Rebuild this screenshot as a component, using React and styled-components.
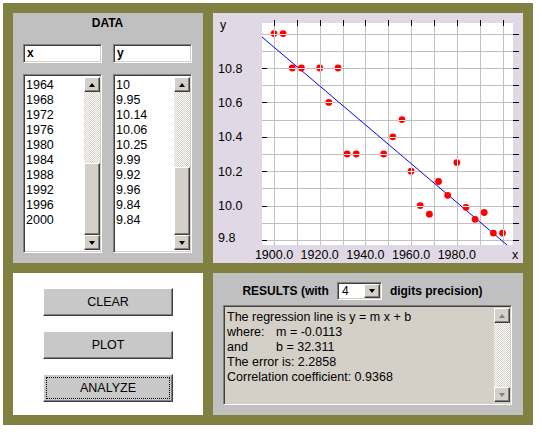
import React from 'react';
import styled, { createGlobalStyle } from 'styled-components';

const Global = createGlobalStyle`
  html, body { margin: 0; padding: 0; background: #fff; }
  body { font-family: "Liberation Sans", Arial, sans-serif; font-size: 12px; color: #000; }
`;

const Frame = styled.div`
  margin: 3px;
  width: 530px;
  height: 422px;
  box-sizing: border-box;
  background: #808040;
  padding: 10px;
  display: grid;
  grid-template-columns: 190px 310px;
  grid-template-rows: 250px 142px;
  gap: 10px;
`;

const DataPanel = styled.section`
  background: #c0c0c0;
  padding: 3px 11px 10px 10px;
  display: grid;
  grid-template-columns: 79px 79px;
  grid-template-rows: auto auto 1fr;
  column-gap: 11px;
  min-height: 0;
`;

const Title = styled.div`
  grid-column: 1 / -1;
  text-align: center;
  font-weight: bold;
  font-size: 12px;
  line-height: 14px;
`;

const sunken = `
  border: 1px solid;
  border-color: #808080 #ffffff #ffffff #808080;
  box-shadow: inset 1px 1px 0 #404040, inset -1px -1px 0 #d4d0c8;
`;

const raised = `
  border: 1px solid;
  border-color: #ffffff #404040 #404040 #ffffff;
  box-shadow: inset -1px -1px 0 #808080;
`;

const TextField = styled.div`
  ${sunken}
  margin-top: 14px;
  background: #fff;
  box-sizing: border-box;
  height: 19px;
  padding: 1px 3px;
  font-weight: bold;
  line-height: 15px;
`;

const ListBox = styled.div`
  ${sunken}
  margin-top: 11px;
  box-sizing: border-box;
  background: #fff;
  display: flex;
  padding: 1px;
  min-height: 0;
`;

const Items = styled.div`
  flex: 1;
  padding: 2px 0 0 1px;
  line-height: 15px;
  font-size: 12.5px;
`;

const ScrollBar = styled.div`
  width: 16px;
  display: flex;
  flex-direction: column;
  margin: 1px 0;
`;

const ArrowBtn = styled.div`
  ${raised}
  box-sizing: border-box;
  width: 16px;
  height: 15px;
  background: #d4d0c8;
  display: flex;
  align-items: center;
  justify-content: center;
  &::after {
    content: '';
    width: 0;
    height: 0;
    border-left: 3.5px solid transparent;
    border-right: 3.5px solid transparent;
    ${({ $dir, $disabled }) =>
      $dir === 'up'
        ? `border-bottom: 4px solid ${$disabled ? '#808080' : '#000'};`
        : `border-top: 4px solid ${$disabled ? '#808080' : '#000'};`}
  }
`;

const Track = styled.div`
  flex: 1;
  display: flex;
  flex-direction: column;
  justify-content: flex-end;
  background: repeating-conic-gradient(#d4d0c8 0 25%, #ffffff 0 50%) 0 0 / 2px 2px;
`;

const Thumb = styled.div`
  ${raised}
  box-sizing: border-box;
  background: #d4d0c8;
  height: ${({ $h }) => $h}px;
`;

const PlotPanel = styled.section`
  background: #e0d8e4;
`;

const ButtonPanel = styled.section`
  background: #fff;
  display: flex;
  flex-direction: column;
  align-items: center;
  padding-top: 15px;
  gap: 15px;
`;

const Button = styled.button`
  ${raised}
  width: 130px;
  height: 28px;
  background: #c8c8c8;
  font-family: "Liberation Sans", Arial, sans-serif;
  font-size: 12.5px;
  color: #000;
  padding: 0;
  border-radius: 0;
  outline: ${({ $focus }) => ($focus ? '1px dotted #000' : 'none')};
  outline-offset: -4px;
`;

const ResultsPanel = styled.section`
  background: #c0c0c0;
  padding: 9px 11px 10px 10px;
  display: flex;
  flex-direction: column;
  gap: 5px;
`;

const Header = styled.div`
  display: flex;
  align-items: center;
  justify-content: center;
  gap: 8px;
  font-weight: bold;
  padding-right: 10px;
`;

const Select = styled.div`
  ${sunken}
  box-sizing: border-box;
  width: 45px;
  height: 18px;
  background: #fff;
  display: flex;
  align-items: center;
  padding: 1px;
  font-weight: normal;
`;

const SelectValue = styled.span`
  flex: 1;
  padding-left: 3px;
`;

const DropBtn = styled(ArrowBtn)`
  height: 14px;
`;

const ResultArea = styled.div`
  ${sunken}
  flex: 1;
  box-sizing: border-box;
  background: #d4d0c8;
  display: flex;
  padding: 1px;
`;

const ResultText = styled.div`
  flex: 1;
  padding: 3px 0 0 2px;
  line-height: 15px;
  font-size: 12.5px;
`;

const Tab = styled.span`
  display: inline-block;
  width: 49px;
`;

const years = [1900, 1904, 1908, 1912, 1920, 1924, 1928, 1932, 1936, 1948, 1952, 1956, 1960, 1964, 1968, 1972, 1976, 1980, 1984, 1988, 1992, 1996, 2000];
const vals = [11.0, 11.0, 10.8, 10.8, 10.8, 10.6, 10.8, 10.3, 10.3, 10.3, 10.4, 10.5, 10.2, 10.0, 9.95, 10.14, 10.06, 10.25, 9.99, 9.92, 9.96, 9.84, 9.84];

const X = (yr) => 61 + (yr - 1900) * 2.285;
const Y = (v) => 55 + (10.8 - v) * 172;

function Plot() {
  const vLines = [];
  for (let yr = 1900; yr <= 2000; yr += 10) vLines.push(yr);
  const hLines = [];
  for (let i = 0; i <= 12; i++) hLines.push(Math.round((11.0 - i * 0.1) * 10) / 10);
  const majors = [10.8, 10.6, 10.4, 10.2, 10.0, 9.8];
  return (
    <svg width="310" height="250" viewBox="0 0 310 250" style={{ display: 'block' }}>
      <rect x="49" y="10" width="251" height="222" fill="#fff" />
      <g stroke="#c0c0c0" strokeWidth="1" shapeRendering="crispEdges">
        {vLines.map((yr) => (
          <line key={yr} x1={Math.round(X(yr)) + 0.5} x2={Math.round(X(yr)) + 0.5} y1="10" y2="232" />
        ))}
        {hLines.map((v) => (
          <line key={v} x1="49" x2="300" y1={Math.round(Y(v)) + 0.5} y2={Math.round(Y(v)) + 0.5} />
        ))}
      </g>
      <g stroke="#000" strokeWidth="1" shapeRendering="crispEdges">
        {vLines.map((yr) => (
          <line key={'t' + yr} x1={Math.round(X(yr)) + 0.5} x2={Math.round(X(yr)) + 0.5} y1="7" y2="13" />
        ))}
        {hLines.map((v) => (
          <line key={'r' + v} x1="300" x2="306" y1={Math.round(Y(v)) + 0.5} y2={Math.round(Y(v)) + 0.5} />
        ))}
        {majors.map((v) => (
          <line key={'l' + v} x1="49" x2="54" y1={Math.round(Y(v)) + 0.5} y2={Math.round(Y(v)) + 0.5} />
        ))}
      </g>
      <line x1="49" y1="24" x2="294" y2="232" stroke="#0000ff" strokeWidth="1" />
      {years.map((yr, i) => {
        const cx = X(yr);
        const cy = Y(vals[i]);
        const onV = yr % 10 === 0;
        const near = Math.round(vals[i] * 10) / 10;
        const onH = Math.abs(vals[i] - near) < 0.015;
        const ly = Math.round(Y(near)) + 0.5;
        return (
          <g key={yr}>
            <circle cx={cx} cy={cy} r="3.4" fill="#ff0000" />
            {onH && <line x1={cx - 3.5} x2={cx + 3.5} y1={ly} y2={ly} stroke="#fff0f0" strokeWidth="1" />}
            {onV && (
              <line x1={Math.round(cx) + 0.5} x2={Math.round(cx) + 0.5} y1={cy - 3.5} y2={cy + 3.5} stroke="#fff0f0" strokeWidth="1" />
            )}
          </g>
        );
      })}
      <g fontFamily="Liberation Sans, Arial, sans-serif" fontSize="12.5" fill="#000">
        <text x="7" y="16">y</text>
        {majors.map((v) => (
          <text key={'lab' + v} x="5" y={(v === 9.8 ? Y(v) - 3 : Y(v)) + 4.5}>
            {v.toFixed(1)}
          </text>
        ))}
        {[1900, 1920, 1940, 1960, 1980].map((yr) => (
          <text key={'x' + yr} x={X(yr)} y="246" textAnchor="middle">
            {yr.toFixed(1)}
          </text>
        ))}
        <text x="299" y="246">x</text>
      </g>
    </svg>
  );
}

function VScroll({ thumb, disabled }) {
  return (
    <ScrollBar>
      <ArrowBtn $dir="up" $disabled={disabled} />
      <Track>{thumb ? <Thumb $h={thumb} /> : null}</Track>
      <ArrowBtn $dir="down" $disabled={disabled} />
    </ScrollBar>
  );
}

const xs = ['1964', '1968', '1972', '1976', '1980', '1984', '1988', '1992', '1996', '2000'];
const ys = ['10', '9.95', '10.14', '10.06', '10.25', '9.99', '9.92', '9.96', '9.84', '9.84'];

export default function App() {
  return (
    <>
      <Global />
      <Frame>
        <DataPanel>
          <Title>DATA</Title>
          <TextField>x</TextField>
          <TextField>y</TextField>
          <ListBox>
            <Items>
              {xs.map((t, i) => (
                <div key={i}>{t}</div>
              ))}
            </Items>
            <VScroll thumb={72} />
          </ListBox>
          <ListBox>
            <Items>
              {ys.map((t, i) => (
                <div key={i}>{t}</div>
              ))}
            </Items>
            <VScroll thumb={68} />
          </ListBox>
        </DataPanel>
        <PlotPanel>
          <Plot />
        </PlotPanel>
        <ButtonPanel>
          <Button>CLEAR</Button>
          <Button>PLOT</Button>
          <Button $focus>ANALYZE</Button>
        </ButtonPanel>
        <ResultsPanel>
          <Header>
            <span>RESULTS (with</span>
            <Select>
              <SelectValue>4</SelectValue>
              <DropBtn $dir="down" />
            </Select>
            <span>digits precision)</span>
          </Header>
          <ResultArea>
            <ResultText>
              <div>The regression line is y = m x + b</div>
              <div>
                <Tab>where:</Tab>m = -0.0113
              </div>
              <div>
                <Tab>and</Tab>b = 32.311
              </div>
              <div>The error is: 2.2858</div>
              <div>Correlation coefficient: 0.9368</div>
            </ResultText>
            <VScroll disabled />
          </ResultArea>
        </ResultsPanel>
      </Frame>
    </>
  );
}
